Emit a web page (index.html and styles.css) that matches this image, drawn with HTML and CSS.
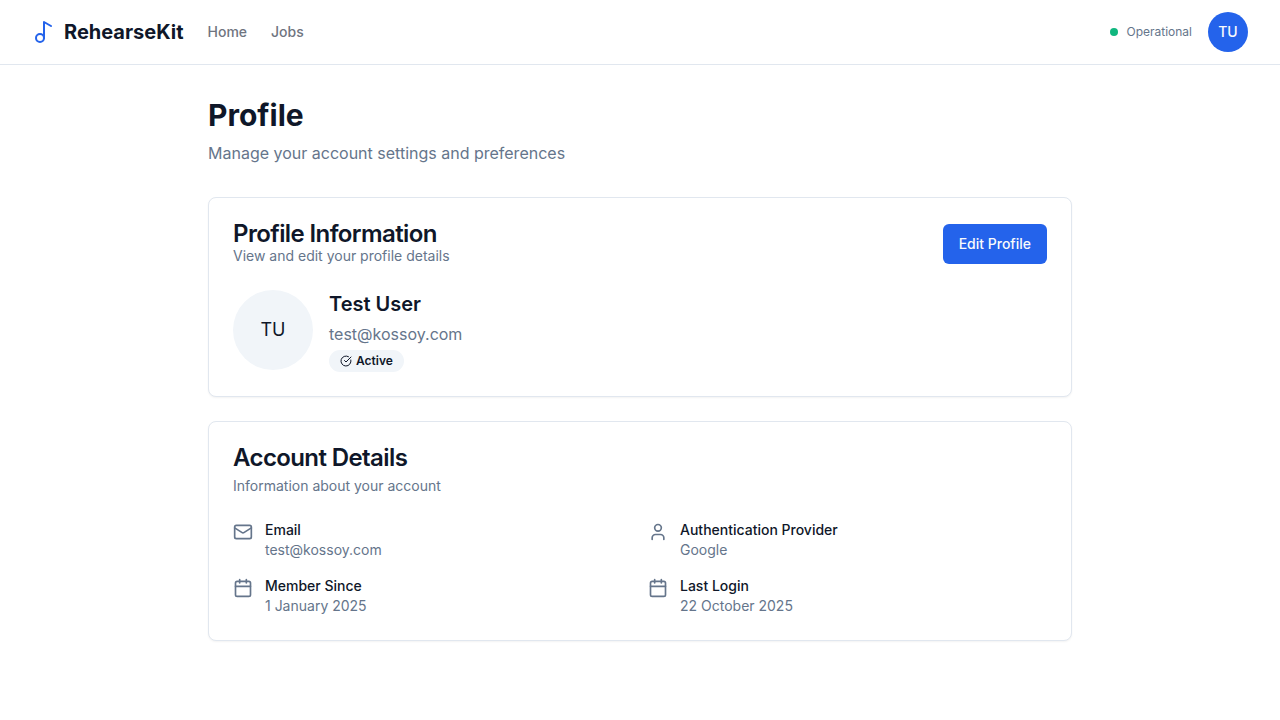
FILE: index.html
```html
<!DOCTYPE html>
<html lang="en">
<head>
<meta charset="utf-8">
<title>Profile - RehearseKit</title>
<link rel="stylesheet" href="styles.css">
</head>
<body>
<header class="navbar">
  <a class="brand">
    <svg class="icon brand-icon" viewBox="0 0 24 24"><circle cx="8" cy="18" r="4"/><path d="M12 18V2l7 4"/></svg>
    <span>RehearseKit</span>
  </a>
  <nav class="nav-links"><a>Home</a><a>Jobs</a></nav>
  <div class="nav-end">
    <div class="status"><span class="status-dot"></span><span>Operational</span></div>
    <button class="avatar-small">TU</button>
  </div>
</header>
<main class="page">
  <div class="page-heading">
    <h1>Profile</h1>
    <p>Manage your account settings and preferences</p>
  </div>
  <section class="card profile-card">
    <div class="card-header card-header-split">
      <div>
        <h2>Profile Information</h2>
        <p class="card-description">View and edit your profile details</p>
      </div>
      <button class="button">Edit Profile</button>
    </div>
    <div class="profile">
      <div class="avatar-large">TU</div>
      <div class="profile-text">
        <h3>Test User</h3>
        <p class="profile-email">test@kossoy.com</p>
        <div class="badge">
          <svg class="icon badge-icon" viewBox="0 0 24 24"><path d="M21.801 10A10 10 0 1 1 17 3.335"/><path d="m9 11 3 3L22 4"/></svg>
          <span>Active</span>
        </div>
      </div>
    </div>
  </section>
  <section class="card account-card">
    <div class="card-header card-header-stacked">
      <h2>Account Details</h2>
      <p class="card-description">Information about your account</p>
    </div>
    <div class="details">
      <div class="detail">
        <svg class="icon detail-icon" viewBox="0 0 24 24"><rect width="20" height="16" x="2" y="4" rx="2"/><path d="m22 7-8.97 5.7a1.94 1.94 0 0 1-2.06 0L2 7"/></svg>
        <div><p class="detail-label">Email</p><p class="detail-value">test@kossoy.com</p></div>
      </div>
      <div class="detail">
        <svg class="icon detail-icon" viewBox="0 0 24 24"><path d="M19 21v-2a4 4 0 0 0-4-4H9a4 4 0 0 0-4 4v2"/><circle cx="12" cy="7" r="4"/></svg>
        <div><p class="detail-label">Authentication Provider</p><p class="detail-value">Google</p></div>
      </div>
      <div class="detail">
        <svg class="icon detail-icon" viewBox="0 0 24 24"><path d="M8 2v4"/><path d="M16 2v4"/><rect width="18" height="18" x="3" y="4" rx="2"/><path d="M3 10h18"/></svg>
        <div><p class="detail-label">Member Since</p><p class="detail-value">1 January 2025</p></div>
      </div>
      <div class="detail">
        <svg class="icon detail-icon" viewBox="0 0 24 24"><path d="M8 2v4"/><path d="M16 2v4"/><rect width="18" height="18" x="3" y="4" rx="2"/><path d="M3 10h18"/></svg>
        <div><p class="detail-label">Last Login</p><p class="detail-value">22 October 2025</p></div>
      </div>
    </div>
  </section>
</main>
</body>
</html>
```
FILE: styles.css
```css
* { box-sizing: border-box; margin: 0; padding: 0; }
body {
  font-family: Inter, "Liberation Sans", sans-serif;
  font-size: 16px;
  line-height: 24px;
  color: #0f1729;
  background: #fff;
}
button { font: inherit; border: 0; }
.icon {
  display: block;
  flex-shrink: 0;
  fill: none;
  stroke: currentColor;
  stroke-width: 2;
  stroke-linecap: round;
  stroke-linejoin: round;
}
.navbar {
  display: flex;
  align-items: center;
  height: 65px;
  padding: 0 32px;
  border-bottom: 1px solid #e1e7ef;
}
.brand {
  display: flex;
  align-items: center;
  gap: 8px;
  font-size: 20px;
  line-height: 28px;
  font-weight: 700;
}
.brand-icon { width: 24px; height: 24px; color: #2463eb; }
.nav-links {
  display: flex;
  gap: 24px;
  margin-left: 24px;
  font-size: 14px;
  line-height: 20px;
  font-weight: 500;
  color: #6f747f;
}
.nav-end { display: flex; align-items: center; gap: 16px; margin-left: auto; }
.status {
  display: flex;
  align-items: center;
  gap: 8px;
  font-size: 12px;
  line-height: 16px;
  color: #65758b;
}
.status-dot { width: 8px; height: 8px; border-radius: 50%; background: #10b77f; }
.avatar-small {
  width: 40px;
  height: 40px;
  border-radius: 50%;
  background: #2463eb;
  color: #f8fafc;
  font-size: 14px;
  line-height: 20px;
  font-weight: 500;
}
.page { width: 864px; margin: 0 auto; padding: 32px 0; }
.page-heading { margin-bottom: 32px; }
.page-heading h1 { font-size: 30px; line-height: 36px; font-weight: 700; margin-bottom: 8px; }
.page-heading p { color: #65758b; }
.card {
  border: 1px solid #e1e7ef;
  border-radius: 8px;
  background: #fff;
  box-shadow: 0 1px 2px rgba(0, 0, 0, 0.05);
  padding: 24px;
}
.profile-card { margin-bottom: 24px; }
.card h2 { font-size: 24px; line-height: 24px; font-weight: 600; letter-spacing: -0.6px; }
.card-description { font-size: 14px; line-height: 20px; color: #65758b; }
.card-header-split {
  display: flex;
  justify-content: space-between;
  align-items: center;
  margin-bottom: 24px;
}
.card-header-stacked { display: flex; flex-direction: column; gap: 6px; margin-bottom: 24px; }
.button {
  height: 40px;
  padding: 0 16px;
  border-radius: 6px;
  background: #2463eb;
  color: #f8fafc;
  font-size: 14px;
  line-height: 20px;
  font-weight: 500;
}
.profile { display: flex; align-items: flex-start; gap: 16px; }
.avatar-large {
  display: flex;
  align-items: center;
  justify-content: center;
  width: 80px;
  height: 80px;
  border-radius: 50%;
  background: #f1f5f9;
  font-size: 18px;
  line-height: 28px;
}
.profile-text h3 { font-size: 20px; line-height: 28px; font-weight: 600; }
.profile-email { color: #65758b; margin-top: 4px; }
.badge {
  display: flex;
  align-items: center;
  gap: 4px;
  width: fit-content;
  margin-top: 4px;
  padding: 2px 10px;
  border: 1px solid transparent;
  border-radius: 999px;
  background: #f1f5f9;
  font-size: 12px;
  line-height: 16px;
  font-weight: 600;
}
.badge-icon { width: 12px; height: 12px; }
.details { display: grid; grid-template-columns: 1fr 1fr; gap: 16px; }
.detail { display: flex; align-items: flex-start; gap: 12px; font-size: 14px; line-height: 20px; }
.detail-icon { width: 20px; height: 20px; margin-top: 2px; color: #65758b; }
.detail-label { font-weight: 500; }
.detail-value { color: #65758b; }
```
